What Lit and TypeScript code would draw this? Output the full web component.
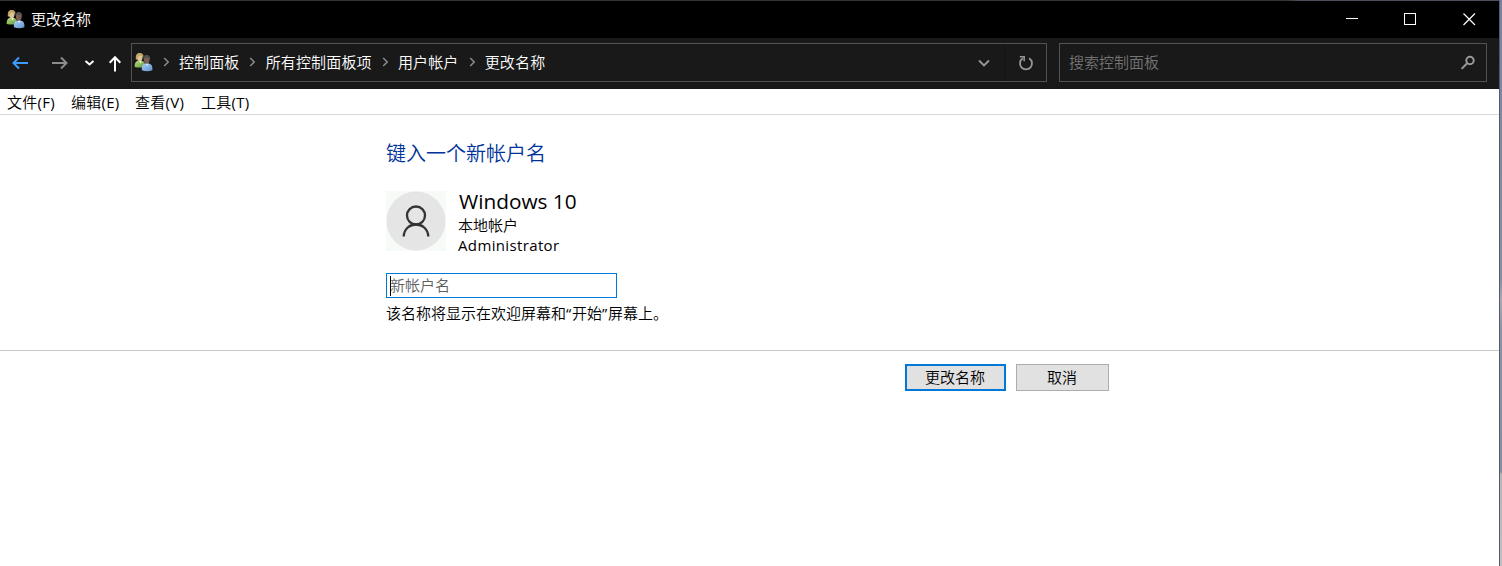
import { LitElement, html, css } from "lit";
import { customElement } from "lit/decorators.js";

const users = html`<svg class="users" width="20" height="20" viewBox="0 0 20 20">
  <defs>
    <linearGradient id="g" x1="0" y1="0" x2="1" y2="1"><stop offset="0" stop-color="#b5dc86"/><stop offset="1" stop-color="#5f9a38"/></linearGradient>
    <linearGradient id="b" x1="0" y1="0" x2="1" y2="1"><stop offset="0" stop-color="#a9d0f5"/><stop offset="1" stop-color="#5d92cf"/></linearGradient>
  </defs>
  <path d="M.7 14C.5 11 1.300 8.300 4.100 7.700h3.700c2 .5 3 2 3.200 4.500V14Q6 15.200 .7 14Z" fill="url(#g)"/>
  <path d="M4.800 7.700h2.800L7 11Z" fill="#f0e6c8"/>
  <ellipse cx="5.700" cy="4.200" rx="2.800" ry="3.900" fill="#dfc598"/>
  <path d="M2 7.100C1.200 2.300 2.700 0 5.500 0s4.600 1.500 3.700 4.500C8.500 3.300 7 2.800 5.200 2.500 3.900 3.500 3.700 5.800 2 7.100Z" fill="#c2a767"/>
  <path d="M7.900 17.300C7.500 13.500 8.500 11.300 10.900 10.600h4c2.700.7 3.800 2.700 3.500 6.700Q13.500 19 7.900 17.300Z" fill="url(#b)"/>
  <path d="M11.500 10.600h3l-1.200 3Z" fill="#dbe8f5"/>
  <ellipse cx="12.700" cy="6.500" rx="2.900" ry="4.100" fill="#7c6150"/>
  <path d="M9.500 6.300C9.100 3.300 10.500 2 12.700 2s4.100 1.400 3.400 5.200C15.400 6.100 15 5.100 13.500 4.700 11.500 4.500 10.300 4.800 9.500 6.300Z" fill="#515154"/>
</svg>`;

const crumbArrow = html`<svg class="sep" width="7" height="10" viewBox="0 0 7 10"><path d="M1.200 1L5.200 5L1.200 9" fill="none" stroke="#8c8c8c" stroke-width="1.500"/></svg>`;

@customElement("app-root")
export class AppRoot extends LitElement {
  static styles = css`
    :host { display: block; width: 1502px; height: 566px; overflow: hidden; font: 350 15px/20px "Open Sans", "Noto Sans CJK SC", sans-serif; color: #000; }
    * { box-sizing: border-box; }
    svg { display: block; flex: none; }
    .desktop { display: flex; height: 566px; background: linear-gradient(#7783a0 0, #8791a6 280px, #a9a9b3 300px, #8b94a8 330px, #858fa6 472px, #b5b6b9 474px, #c0c0c4 566px); }
    .window { width: 1500px; height: 566px; background: #fff; border-right: 1px solid #595b64; display: flex; flex-direction: column; }
    .edge { height: 1px; flex: none; background: linear-gradient(90deg, #343434 0 1285px, #4b505c 1300px); }
    .title { height: 37px; flex: none; background: #000; color: #fff; display: flex; align-items: center; padding-left: 6px; }
    .title .name { margin-left: 5px; flex: 1; padding-bottom: 2px; }
    .title svg.min { margin-right: 45px; }
    .title svg.max { margin-right: 46px; }
    .title svg.close { margin-right: 23px; }
    .nav { height: 51px; flex: none; background: #191919; display: flex; align-items: flex-start; padding-top: 5px; }
    .arrows { width: 131px; height: 39px; display: block; }
    .address { width: 916px; height: 39px; border: 1px solid #535353; display: flex; align-items: center; color: #fff; padding-left: 2px; }
    .address .users { margin-right: 8.700px; }
    .sep { margin: 0 9.200px 2px 0; }
    .crumb { margin-right: 10px; padding-bottom: 2px; letter-spacing: .15px; }
    .crumb.last { flex: 1; margin: 0; }
    .refresh { width: 42px; height: 37px; border-left: 1px solid #141414; margin-left: 14px; display: flex; align-items: center; padding-left: 13px; }
    .search { margin-left: 12px; width: 428px; height: 39px; border: 1px solid #535353; display: flex; align-items: center; justify-content: space-between; padding: 0 10px 0 9px; color: #747474; }
    .search span { padding-bottom: 2px; }
    .menu { height: 26px; flex: none; border-bottom: 1px solid #d9d9d9; padding: 3px 0 0 7px; display: grid; grid-template-columns: 64px 64px 66px 60px; }
    .menu span { white-space: nowrap; letter-spacing: .25px; }
    .menu b { font-weight: 400; }
    .content { height: 236px; flex: none; border-bottom: 1px solid #c8c8c8; padding: 25px 0 0 386px; }
    h1 { margin: 0; font-size: 20px; line-height: 28px; font-weight: 350; color: #003399; }
    .account { display: flex; margin-top: 23px; height: 64px; }
    .avatar { background: #f6fbf7; }
    .info { margin-left: 12px; line-height: 20px; }
    .user { font-size: 20.800px; font-weight: 400; line-height: 20px; margin: 0 0 4px 1px; }
    .role { letter-spacing: .36px; font-weight: 400; }
    .field { margin-top: 18px; width: 231px; height: 25px; border: 1px solid #0078d7; display: flex; align-items: center; padding-left: 3px; color: #606060; }
    .field span { padding-bottom: 2px; }
    .caret { width: 1px; height: 20px; background: #000; margin-right: -1px; }
    .hint { margin-top: 5px; font-family: "Noto Sans CJK SC", sans-serif; white-space: nowrap; }
    .q { font-family: "Open Sans", sans-serif; font-weight: 400; letter-spacing: .8px; }
    .actions { display: flex; gap: 10px; padding: 13px 0 0 905px; }
    button { font: inherit; color: #000; background: #e1e1e1; padding: 0 1px 2px 0; height: 27px; border: 1px solid #adadad; width: 93px; }
    button.primary { border: 2px solid #0078d7; width: 101px; }
  `;

  render() {
    return html`<div class="desktop"><div class="window">
      <div class="edge"></div>
      <div class="title">${users}<span class="name">更改名称</span>
        <svg class="min" width="13" height="13" viewBox="0 0 13 13"><path d="M0 5.500H12" stroke="#fff"/></svg>
        <svg class="max" width="13" height="13" viewBox="0 0 13 13"><rect x=".5" y=".5" width="11" height="11" fill="none" stroke="#fff"/></svg>
        <svg class="close" width="13" height="13" viewBox="0 0 13 13"><path d="M.5 .5L12 12M12 .5L.5 12" stroke="#fff" stroke-width="1.200"/></svg>
      </div>
      <div class="nav">
        <svg class="arrows" viewBox="0 0 131 39" fill="none" stroke-width="2">
          <path d="M28 20H14M19 14.500L13.500 20L19 25.500" stroke="#3c9bff"/>
          <path d="M52 20H66.500M61 14.500L66.500 20L61 25.500" stroke="#8c8c8c"/>
          <path d="M85.500 18L89.500 21.500L93.500 18" stroke="#fff"/>
          <path d="M115 28.500V14.500M109.700 19.700L115 14.300L120.300 19.700" stroke="#fff"/>
        </svg>
        <div class="address">${users}${crumbArrow}<span class="crumb">控制面板</span>${crumbArrow}<span class="crumb">所有控制面板项</span>${crumbArrow}<span class="crumb">用户帐户</span>${crumbArrow}<span class="crumb last">更改名称</span>
          <svg width="12" height="9" viewBox="0 0 12 9"><path d="M1 2.500L6 7.500L11 2.500" fill="none" stroke="#969696" stroke-width="1.900"/></svg>
          <div class="refresh"><svg width="16" height="16" viewBox="0 0 16 16" fill="none" stroke="#969696"><path d="M4.900 3.300A6 6 0 1 0 11.100 3.300" stroke-width="1.800"/><path d="M1.800 1.700H6.200V6.200" stroke-width="1.500"/></svg></div>
        </div>
        <div class="search"><span>搜索控制面板</span>
          <svg width="16" height="16" viewBox="0 0 16 16" fill="none" stroke="#999" stroke-width="2"><circle cx="10" cy="5.500" r="3.700"/><path d="M7.200 8.300L1.600 13.900"/></svg>
        </div>
      </div>
      <div class="menu"><span>文件<b>(F)</b></span><span>编辑<b>(E)</b></span><span>查看<b>(V)</b></span><span>工具<b>(T)</b></span></div>
      <div class="content">
        <h1>键入一个新帐户名</h1>
        <div class="account">
          <svg class="avatar" width="60" height="60" viewBox="0 0 60 60"><circle cx="30" cy="30" r="29.500" fill="#e5e5e5"/><g fill="none" stroke="#333" stroke-width="2.300"><circle cx="30" cy="24.500" r="9"/><path d="M17.700 45.500C18.500 29.500 41.500 29.500 42.300 45.500"/></g></svg>
          <div class="info"><div class="user">Windows 10</div><div>本地帐户</div><div class="role">Administrator</div></div>
        </div>
        <div class="field"><i class="caret"></i><span>新帐户名</span></div>
        <div class="hint">该名称将显示在欢迎屏幕和<span class="q">“</span>开始<span class="q">”</span>屏幕上。</div>
      </div>
      <div class="actions"><button class="primary">更改名称</button><button>取消</button></div>
    </div></div>`;
  }
}
